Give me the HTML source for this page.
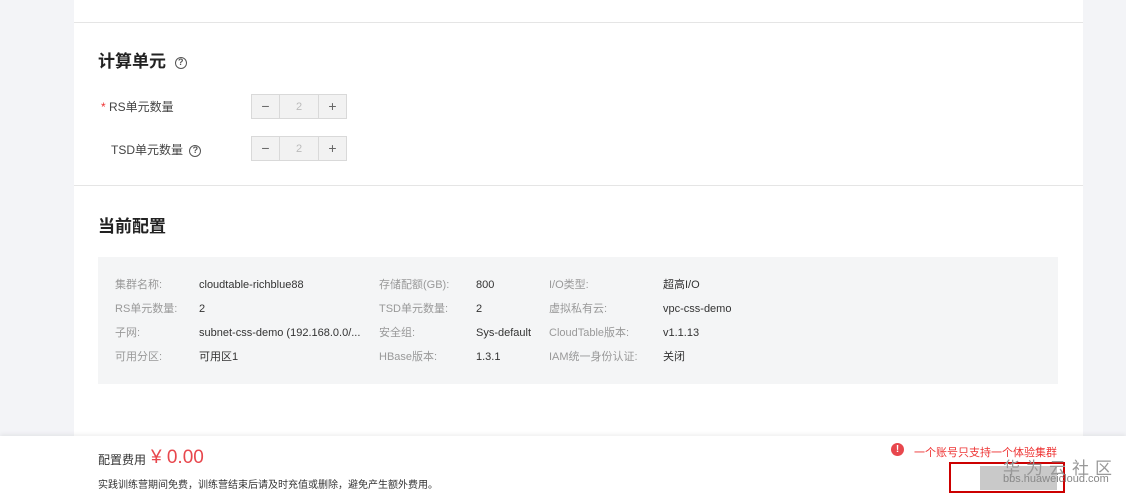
<!DOCTYPE html><html><head><meta charset="utf-8"><style>
*{margin:0;padding:0;box-sizing:border-box}
body{width:1126px;height:494px;overflow:hidden;background:#f3f4f7;font-family:"Liberation Sans","Noto Sans CJK SC",sans-serif;position:relative;color:#333}
.panel{position:absolute;left:74px;top:0;width:1009px;height:494px;background:#fff}
.hr{position:absolute;left:74px;width:1009px;height:1px;background:#e5e5e5}
.abs{position:absolute;white-space:nowrap}
h2{position:absolute;font-size:17px;font-weight:bold;color:#222}
.q{display:inline-block;width:12px;height:12px;border:1.5px solid #555;border-radius:50%;font-size:9px;line-height:9px;text-align:center;font-weight:bold;color:#555;vertical-align:middle}
.lbl{font-size:12px;color:#444}
.step{position:absolute;left:251px;width:96px;height:25px;border:1px solid #d9d9d9;background:#f2f2f2;display:flex}
.step div{height:23px;line-height:23px;text-align:center;font-size:14px;color:#999}
.step .b{width:27px;color:#666}
.step .m{flex:1;border-left:1px solid #d9d9d9;border-right:1px solid #d9d9d9;font-size:11px;color:#bbb;line-height:24px}
.cfg{position:absolute;left:98px;top:257px;width:960px;height:127px;background:#f4f5f6;font-size:11px}
.cfg span{position:absolute;white-space:nowrap;line-height:14px;height:14px}
.k{color:#999}.v{color:#333}
.foot{position:absolute;left:0;top:436px;width:1126px;height:58px;background:#fff;box-shadow:0 -2px 4px rgba(0,0,0,.06)}
</style></head><body>
<div class="panel"></div>
<div class="hr" style="top:22px"></div>
<div class="hr" style="top:185px"></div>
<h2 style="left:98px;top:47px">计算单元 <span class="q" style="margin-left:4px">?</span></h2>
<div class="abs lbl" style="left:101px;top:98px"><span style="color:#e33">*</span> RS单元数量</div>
<div class="abs lbl" style="left:111px;top:141px">TSD单元数量 <span class="q" style="margin-left:3px">?</span></div>
<div class="step" style="top:94px"><div class="b">−</div><div class="m">2</div><div class="b">+</div></div>
<div class="step" style="top:136px"><div class="b">−</div><div class="m">2</div><div class="b">+</div></div>
<h2 style="left:98px;top:212px">当前配置</h2>
<div class="cfg">
<span class="k" style="left:17px;top:21px">集群名称:</span><span class="v" style="left:101px;top:21px">cloudtable-richblue88</span>
<span class="k" style="left:281px;top:21px">存储配额(GB):</span><span class="v" style="left:378px;top:21px">800</span>
<span class="k" style="left:451px;top:21px">I/O类型:</span><span class="v" style="left:565px;top:21px">超高I/O</span>
<span class="k" style="left:17px;top:45px">RS单元数量:</span><span class="v" style="left:101px;top:45px">2</span>
<span class="k" style="left:281px;top:45px">TSD单元数量:</span><span class="v" style="left:378px;top:45px">2</span>
<span class="k" style="left:451px;top:45px">虚拟私有云:</span><span class="v" style="left:565px;top:45px">vpc-css-demo</span>
<span class="k" style="left:17px;top:69px">子网:</span><span class="v" style="left:101px;top:69px">subnet-css-demo (192.168.0.0/...</span>
<span class="k" style="left:281px;top:69px">安全组:</span><span class="v" style="left:378px;top:69px">Sys-default</span>
<span class="k" style="left:451px;top:69px">CloudTable版本:</span><span class="v" style="left:565px;top:69px">v1.1.13</span>
<span class="k" style="left:17px;top:93px">可用分区:</span><span class="v" style="left:101px;top:93px">可用区1</span>
<span class="k" style="left:281px;top:93px">HBase版本:</span><span class="v" style="left:378px;top:93px">1.3.1</span>
<span class="k" style="left:451px;top:93px">IAM统一身份认证:</span><span class="v" style="left:565px;top:93px">关闭</span>
</div>
<div class="foot">
<div class="abs" style="left:98px;top:15px;font-size:12px;color:#333">配置费用</div>
<div class="abs" style="left:151px;top:11px;font-size:19px;color:#e8474d">¥ 0.00</div>
<div class="abs" style="left:98px;top:40px;font-size:10px;color:#333">实践训练营期间免费，训练营结束后请及时充值或删除，避免产生额外费用。</div>
<div class="abs" style="left:891px;top:7px;width:13px;height:13px;border-radius:50%;background:#e8474d;color:#fff;font-size:10px;line-height:13px;text-align:center;font-weight:bold">!</div>
<div class="abs" style="left:914px;top:8px;font-size:11px;color:#e33">一个账号只支持一个体验集群</div>
<div class="abs" style="left:980px;top:30px;width:77px;height:24px;background:#c9c9c9"></div>
<div class="abs" style="left:949px;top:26px;width:116px;height:31px;border:2px solid #c00"></div>
<div class="abs" style="left:1003px;top:18px;font-size:17px;color:#999;letter-spacing:6px">华为云社区</div>
<div class="abs" style="left:1003px;top:37px;font-size:11px;color:#888">bbs.huaweicloud.com</div>
</div>
</body></html>
